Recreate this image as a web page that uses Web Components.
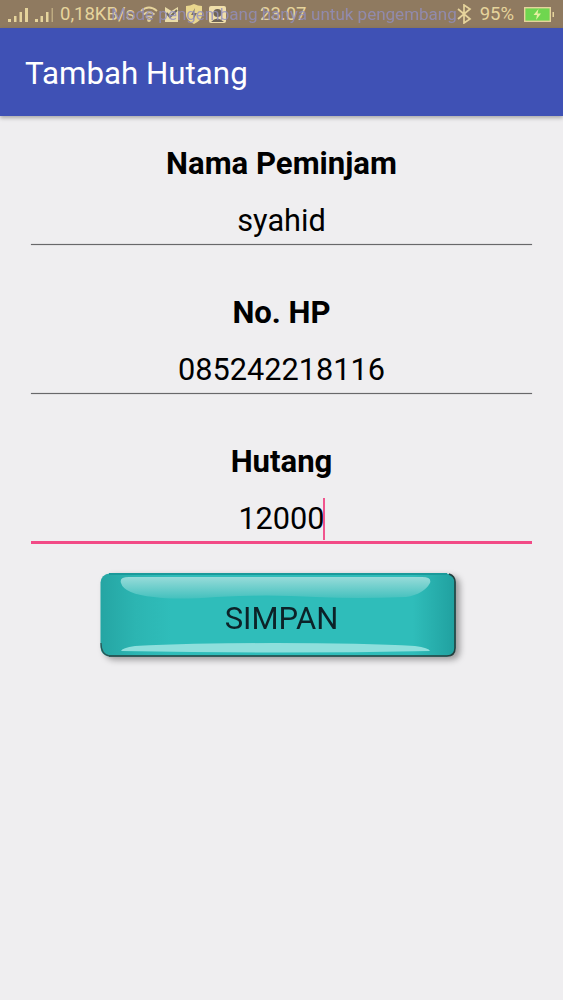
<!DOCTYPE html>
<html>
<head>
<meta charset="utf-8">
<style>
    html, body { margin: 0; padding: 0; background: #efeef0; }
    body { font-family: Roboto, "Liberation Sans", sans-serif; width: 563px; height: 1000px; overflow: hidden; }
</style>
</head>
<body>
<status-bar></status-bar>
<app-bar>Tambah Hutang</app-bar>
<form-page>
    <form-field label="Nama Peminjam" value="syahid"></form-field>
    <form-field label="No. HP" value="085242218116"></form-field>
    <form-field label="Hutang" value="12000" focused></form-field>
    <glossy-button>SIMPAN</glossy-button>
</form-page>

<script>
class StatusBar extends HTMLElement {
    constructor(){
        super();
        this.attachShadow({mode:'open'});
        this.shadowRoot.innerHTML = `
            <style>
                :host{
                    display: flex;
                    position: relative;
                    height: 28px;
                    box-sizing: border-box;
                    padding: 0 9px 0 8px;
                    align-items: center;
                    background: #8f7a60;
                    color: #e6d49c;
                    font-size: 18.500px;
                    line-height: 1;
                    overflow: hidden;
                    white-space: nowrap;
                }
                svg{ display: block; flex: none; }
                .speed{ margin-left: 7px; width: 77px; }
                .wifi{ margin-left: 3px; }
                .msg{ margin-left: 7px; }
                .shield{ margin-left: 8px; }
                .face{ margin-left: 7px; }
                .time{ margin-left: 34px; }
                .bt{ margin-left: auto; }
                .pct{ margin-left: 8px; }
                .batt{ margin-left: 10px; }
                .notice{
                    position: absolute;
                    left: 111px;
                    top: 6px;
                    font-size: 17px;
                    color: #928fc0;
                    opacity: .8;
                }
            </style>
            <svg width="45" height="18" viewBox="0 0 45 18" fill="#e6d49c">
                <rect x="0" y="14" width="3" height="3"/><rect x="6" y="11" width="2.500" height="6"/>
                <rect x="11.500" y="7" width="2.500" height="10"/><rect x="17" y="3" width="3" height="14"/>
                <rect x="27" y="14" width="3" height="3"/><rect x="32.500" y="11" width="2.500" height="6"/>
                <rect x="38" y="7" width="2.500" height="10"/><rect x="43.500" y="3" width="1.500" height="14" opacity=".55"/>
            </svg>
            <span class="speed">0,18KB/s</span>
            <svg class="wifi" width="18" height="18" viewBox="0 0 18 18" fill="none" stroke="#e6d49c" stroke-width="1.800">
                <path d="M1 6q8-7 16 0M3.500 9.500q5.500-4.500 11 0M6 12.500q3-2.500 6 0"/><circle cx="9" cy="15" r="1" fill="#e6d49c"/>
            </svg>
            <svg class="msg" width="13" height="15" viewBox="0 0 13 15">
                <path d="M0 0l6.500 4L13 0v15H0z" fill="#eadca8"/><path d="M1.500 6l3.500 4 7-7" fill="none" stroke="#6f6a5c" stroke-width="2"/>
            </svg>
            <svg class="shield" width="16" height="20" viewBox="0 0 16 20">
                <path d="M0 2q4 0 8-2 4 2 8 2v9q0 5-8 9-8-4-8-9z" fill="#e9d68e"/><path d="M9 4l-4 7h3l-1 5 4-7H8z" fill="#7c7260"/>
            </svg>
            <svg class="face" width="17" height="17" viewBox="0 0 17 17">
                <rect width="17" height="17" rx="2" fill="#f0deaa"/><circle cx="8.500" cy="7" r="4" fill="#6f6456"/><path d="M2 16q6-7 13 0z" fill="#6f6456"/>
            </svg>
            <span class="time">23.07</span>
            <svg class="bt" width="15" height="20" viewBox="0 0 15 20" fill="none" stroke="#e6d49c" stroke-width="1.700">
                <path d="M1 5l12 10-6 4V1l6 4L1 15"/>
            </svg>
            <span class="pct">95%</span>
            <svg class="batt" width="30" height="15" viewBox="0 0 30 15">
                <rect x=".7" y=".7" width="25.600" height="13.600" fill="#6fd64f" stroke="#e6d49c" stroke-width="1.400"/>
                <path d="M14.500 2l-5 6H13l-1 5 5-6.500h-3.500z" fill="#e6f0a0"/>
                <rect x="28.500" y="5" width="1.500" height="5" fill="#e6d49c"/>
            </svg>
            <span class="notice">Mode pengembang hanya untuk pengembang</span>
        `;
    }
}

class AppBar extends HTMLElement {
    constructor(){
        super();
        this.attachShadow({mode:'open'});
        this.shadowRoot.innerHTML = `
            <style>
                :host{
                    display: flex;
                    position: relative;
                    height: 88px;
                    box-sizing: border-box;
                    padding: 3px 25px 0;
                    align-items: center;
                    background: #3f51b5;
                    color: #fff;
                    font-size: 31.300px;
                    box-shadow: 0 2px 4px rgba(0,0,0,.3);
                }
            </style>
            <slot></slot>
        `;
    }
}

class FormPage extends HTMLElement {
    constructor(){
        super();
        this.attachShadow({mode:'open'});
        this.shadowRoot.innerHTML = `
            <style>
                :host{
                    display: flex;
                    flex-direction: column;
                    align-items: center;
                    padding: 29px 31px 0;
                    color: #000;
                }
            </style>
            <slot></slot>
        `;
    }
}

class FormField extends HTMLElement {
    constructor(){
        super();
        this.attachShadow({mode:'open'});
    }

    static get observedAttributes(){
        return ['label', 'value', 'focused'];
    }

    FieldTemplate(){
        const focused = this.hasAttribute('focused');
        return `
            <style>
                :host{
                    display: block;
                    align-self: stretch;
                    height: 149px;
                    text-align: center;
                }
                .label{
                    font-size: 31.100px;
                    font-weight: 700;
                    line-height: 38px;
                }
                .value{
                    margin-top: 19px;
                    font-size: 30.700px;
                    line-height: 38px;
                    height: 38px;
                }
                .value span{ position: relative; display: inline-block; }
                .caret{
                    position: absolute;
                    right: 0;
                    top: -2px;
                    width: 2px;
                    height: 42px;
                    background: #f0558e;
                }
                .line{
                    margin-top: ${focused ? 3 : 4}px;
                    height: ${focused ? 3 : 1}px;
                    background: ${focused ? '#f24a86' : '#68686a'};
                    box-shadow: ${focused ? 'none' : '0 0 1px rgba(60,60,62,.7)'};
                }
            </style>
            <div class="label">${this.getAttribute('label') || ''}</div>
            <div class="value"><span>${this.getAttribute('value') || ''}${focused ? '<i class="caret"></i>' : ''}</span></div>
            <div class="line"></div>
        `;
    }

    connectedCallback(){
        this.shadowRoot.innerHTML = this.FieldTemplate();
    }

    attributeChangedCallback(){
        this.shadowRoot.innerHTML = this.FieldTemplate();
    }
}

class GlossyButton extends HTMLElement {
    constructor(){
        super();
        this.attachShadow({mode:'open'});
        this.shadowRoot.innerHTML = `
            <style>
                :host{
                    display: flex;
                    position: relative;
                    width: 356px;
                    height: 84px;
                    margin: -19px 7px 0 0;
                    padding: 6px 0 0 7px;
                    box-sizing: border-box;
                    align-items: center;
                    justify-content: center;
                    color: #0c2228;
                    font-size: 31px;
                    filter: drop-shadow(4px 3px 3px rgba(0,0,0,.35));
                }
                svg{
                    position: absolute;
                    left: 0;
                    top: 0;
                }
                slot{ display: block; position: relative; }
            </style>
            <svg width="356" height="84" viewBox="0 0 356 84">
                <defs>
                    <linearGradient id="side" x1="0" x2="1" y1="0" y2="0">
                        <stop offset="0" stop-color="#25a5a3"/>
                        <stop offset=".1" stop-color="#2cb5b2"/>
                        <stop offset=".2" stop-color="#2fbdba"/>
                        <stop offset=".88" stop-color="#2fbdba"/>
                        <stop offset="1" stop-color="#20a09f"/>
                    </linearGradient>
                    <linearGradient id="gloss" x1="0" x2="0" y1="0" y2="1">
                        <stop offset="0" stop-color="#97dbd9"/>
                        <stop offset="1" stop-color="#44c1be"/>
                    </linearGradient>
                </defs>
                <rect x=".5" y=".5" width="355" height="83" rx="9" fill="url(#side)"/>
                <path d="M9 1H347" stroke="#1a9a9a" stroke-width="2" fill="none"/>
                <path d="M9 83H347q8 0 8-8V9q0-6-6-8" stroke="#23403f" stroke-width="1.600" fill="none"/>
                <path d="M1 70q0 12 9 13" stroke="#2c5453" stroke-width="1.200" fill="none"/>
                <path d="M21 10q-2-6 8-6H322q10 0 8 6-6 11-24 14-50 2-90 0-50-3-100 0-40 3-62 0-30-3-33-14z" fill="url(#gloss)"/>
                <path d="M21 78q1-3 14-5 60-3 140-3 90 0 140 3 14 2 15 5-150 3-309 0z" fill="#8edfdc"/>
            </svg>
            <slot></slot>
        `;
    }
}

customElements.define('status-bar', StatusBar);
customElements.define('app-bar', AppBar);
customElements.define('form-page', FormPage);
customElements.define('form-field', FormField);
customElements.define('glossy-button', GlossyButton);
</script>
</body>
</html>
